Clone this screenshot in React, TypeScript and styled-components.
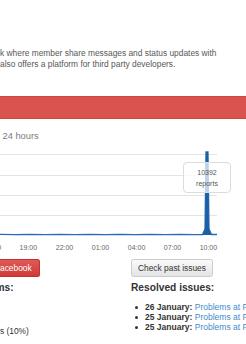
import React from "react";
import styled, { createGlobalStyle } from "styled-components";

const Global = createGlobalStyle`
  html, body { margin: 0; padding: 0; background: #fff; }
  body { font-family: "Liberation Sans", Arial, sans-serif; overflow: hidden; }
  * { box-sizing: border-box; }
`;

const Page = styled.div`
  width: 246px;
  height: 344px;
  overflow: hidden;
`;

const Description = styled.p`
  margin: 0;
  padding-top: 48px;
  font-size: 8.4px;
  line-height: 10.5px;
  color: #585858;
  white-space: nowrap;
`;

const StatusBar = styled.div`
  margin-top: 27px;
  height: 23px;
  background: #d9534f;
  border-top: 1px solid #d0463f;
  border-bottom: 1px solid #d0463f;
`;

const Subtitle = styled.h4`
  margin: 11px 0 0 2.5px;
  font-size: 9.3px;
  line-height: 12px;
  font-weight: normal;
  color: #7a7a7a;
  white-space: nowrap;
`;

const ChartBox = styled.div`
  position: relative;
  margin-top: 3px;
  height: 110px;
`;

const Tooltip = styled.div`
  position: absolute;
  left: 183px;
  top: 17px;
  width: 48px;
  height: 31px;
  padding-top: 4px;
  border: 1px solid #dcdcdc;
  border-radius: 4px;
  background: rgba(255, 255, 255, 0.72);
  font-size: 7px;
  line-height: 11px;
  color: #555;
  text-align: center;
`;

const Columns = styled.div`
  display: grid;
  grid-template-columns: 131px 1fr;
  margin-top: 4px;
  align-items: start;
`;

const Column = styled.div`
  display: flex;
  flex-direction: column;
  align-items: flex-start;
  min-width: 0;
`;

const Button = styled.button<{ $variant: "danger" | "default"; $clipped?: boolean }>`
  height: 18px;
  margin: 0;
  padding: ${(p) => (p.$clipped ? "0 7px 0 0" : "0 6px")};
  font-family: "Liberation Sans", Arial, sans-serif;
  font-size: 8.4px;
  line-height: 16px;
  white-space: nowrap;
  border: 1px solid ${(p) => (p.$variant === "danger" ? "#c9302c" : "#cccccc")};
  border-left-width: ${(p) => (p.$clipped ? "0" : "1px")};
  border-radius: ${(p) => (p.$clipped ? "0 2.5px 2.5px 0" : "2.5px")};
  color: ${(p) => (p.$variant === "danger" ? "#ffffff" : "#333333")};
  background: ${(p) =>
    p.$variant === "danger"
      ? "linear-gradient(to bottom, #de5a56 0%, #cf3b37 100%)"
      : "linear-gradient(to bottom, #fafafa 0%, #e4e4e4 100%)"};
`;

const Heading = styled.h3<{ $indent?: number }>`
  margin: 5px 0 0;
  font-size: 10.2px;
  line-height: 12px;
  font-weight: bold;
  color: #333;
  white-space: nowrap;
  text-indent: ${(p) => p.$indent ?? 0}px;
`;

const ShareLine = styled.p`
  margin: 32px 0 0;
  font-size: 8.4px;
  line-height: 10px;
  color: #333;
  white-space: nowrap;
`;

const IssueList = styled.ul`
  margin: 8px 0 0;
  padding: 0;
  list-style: none;
`;

const Issue = styled.li`
  display: flex;
  align-items: center;
  font-size: 8.5px;
  line-height: 10px;
  color: #333;
  white-space: nowrap;
  &::before {
    content: "";
    width: 3px;
    height: 3px;
    border-radius: 50%;
    background: #333;
    margin: 0 7px 0 4px;
    flex: none;
  }
`;

const IssueDate = styled.b`
  margin-right: 2.5px;
`;

const IssueLink = styled.a`
  color: #428bca;
  text-decoration: none;
`;

const hours = [
  { x: -7.7, t: "16:00" },
  { x: 28.3, t: "19:00" },
  { x: 64.5, t: "22:00" },
  { x: 100.5, t: "01:00" },
  { x: 136.6, t: "04:00" },
  { x: 172.5, t: "07:00" },
  { x: 208.4, t: "10:00" },
];

const baseline =
  "0,89.4 15,89.6 30,89.3 45,89.6 60,89.4 75,89.7 90,89.4 105,89.6 120,89.3 135,89.6 150,89.4 165,89.6 180,89.4 195,89.6 202.5,89.5";

const Chart = () => (
  <svg width="246" height="110" viewBox="0 0 246 110">
    {[9.5, 30.5, 50.5, 70.5].map((y) => (
      <line key={y} x1="0" x2="217" y1={y} y2={y} stroke="#e4e4e4" strokeWidth="1" />
    ))}
    <polyline points={`${baseline} 205,84 206,7 208,7 209,84 211.5,89.5 217,89.5`} fill="none" stroke="#2a6cb3" strokeWidth="1.3" />
    <path d="M202.5,90 L205,84 L206,7 L208,7 L209,84 L211.5,90 Z" fill="#1d5ea8" />
    {hours.map((h) => (
      <text key={h.t} x={h.x} y="104.5" textAnchor="middle" fontSize="7" fill="#666" fontFamily="Liberation Sans, Arial, sans-serif">
        {h.t}
      </text>
    ))}
  </svg>
);

export default function App() {
  return (
    <Page>
      <Global />
      <Description>
        k where member share messages and status updates with
        <br />
        also offers a platform for third party developers.
      </Description>
      <StatusBar />
      <Subtitle>24 hours</Subtitle>
      <ChartBox>
        <Chart />
        <Tooltip>
          10392
          <br />
          reports
        </Tooltip>
      </ChartBox>
      <Columns>
        <Column>
          <Button $variant="danger" $clipped>acebook</Button>
          <Heading $indent={-4.5}>ms:</Heading>
          <ShareLine>s (10%)</ShareLine>
        </Column>
        <Column>
          <Button $variant="default">Check past issues</Button>
          <Heading>Resolved issues:</Heading>
          <IssueList>
            <Issue>
              <IssueDate>26 January:</IssueDate>
              <IssueLink href="#">Problems at Facebook</IssueLink>
            </Issue>
            <Issue>
              <IssueDate>25 January:</IssueDate>
              <IssueLink href="#">Problems at Facebook</IssueLink>
            </Issue>
            <Issue>
              <IssueDate>25 January:</IssueDate>
              <IssueLink href="#">Problems at Facebook</IssueLink>
            </Issue>
          </IssueList>
        </Column>
      </Columns>
    </Page>
  );
}
